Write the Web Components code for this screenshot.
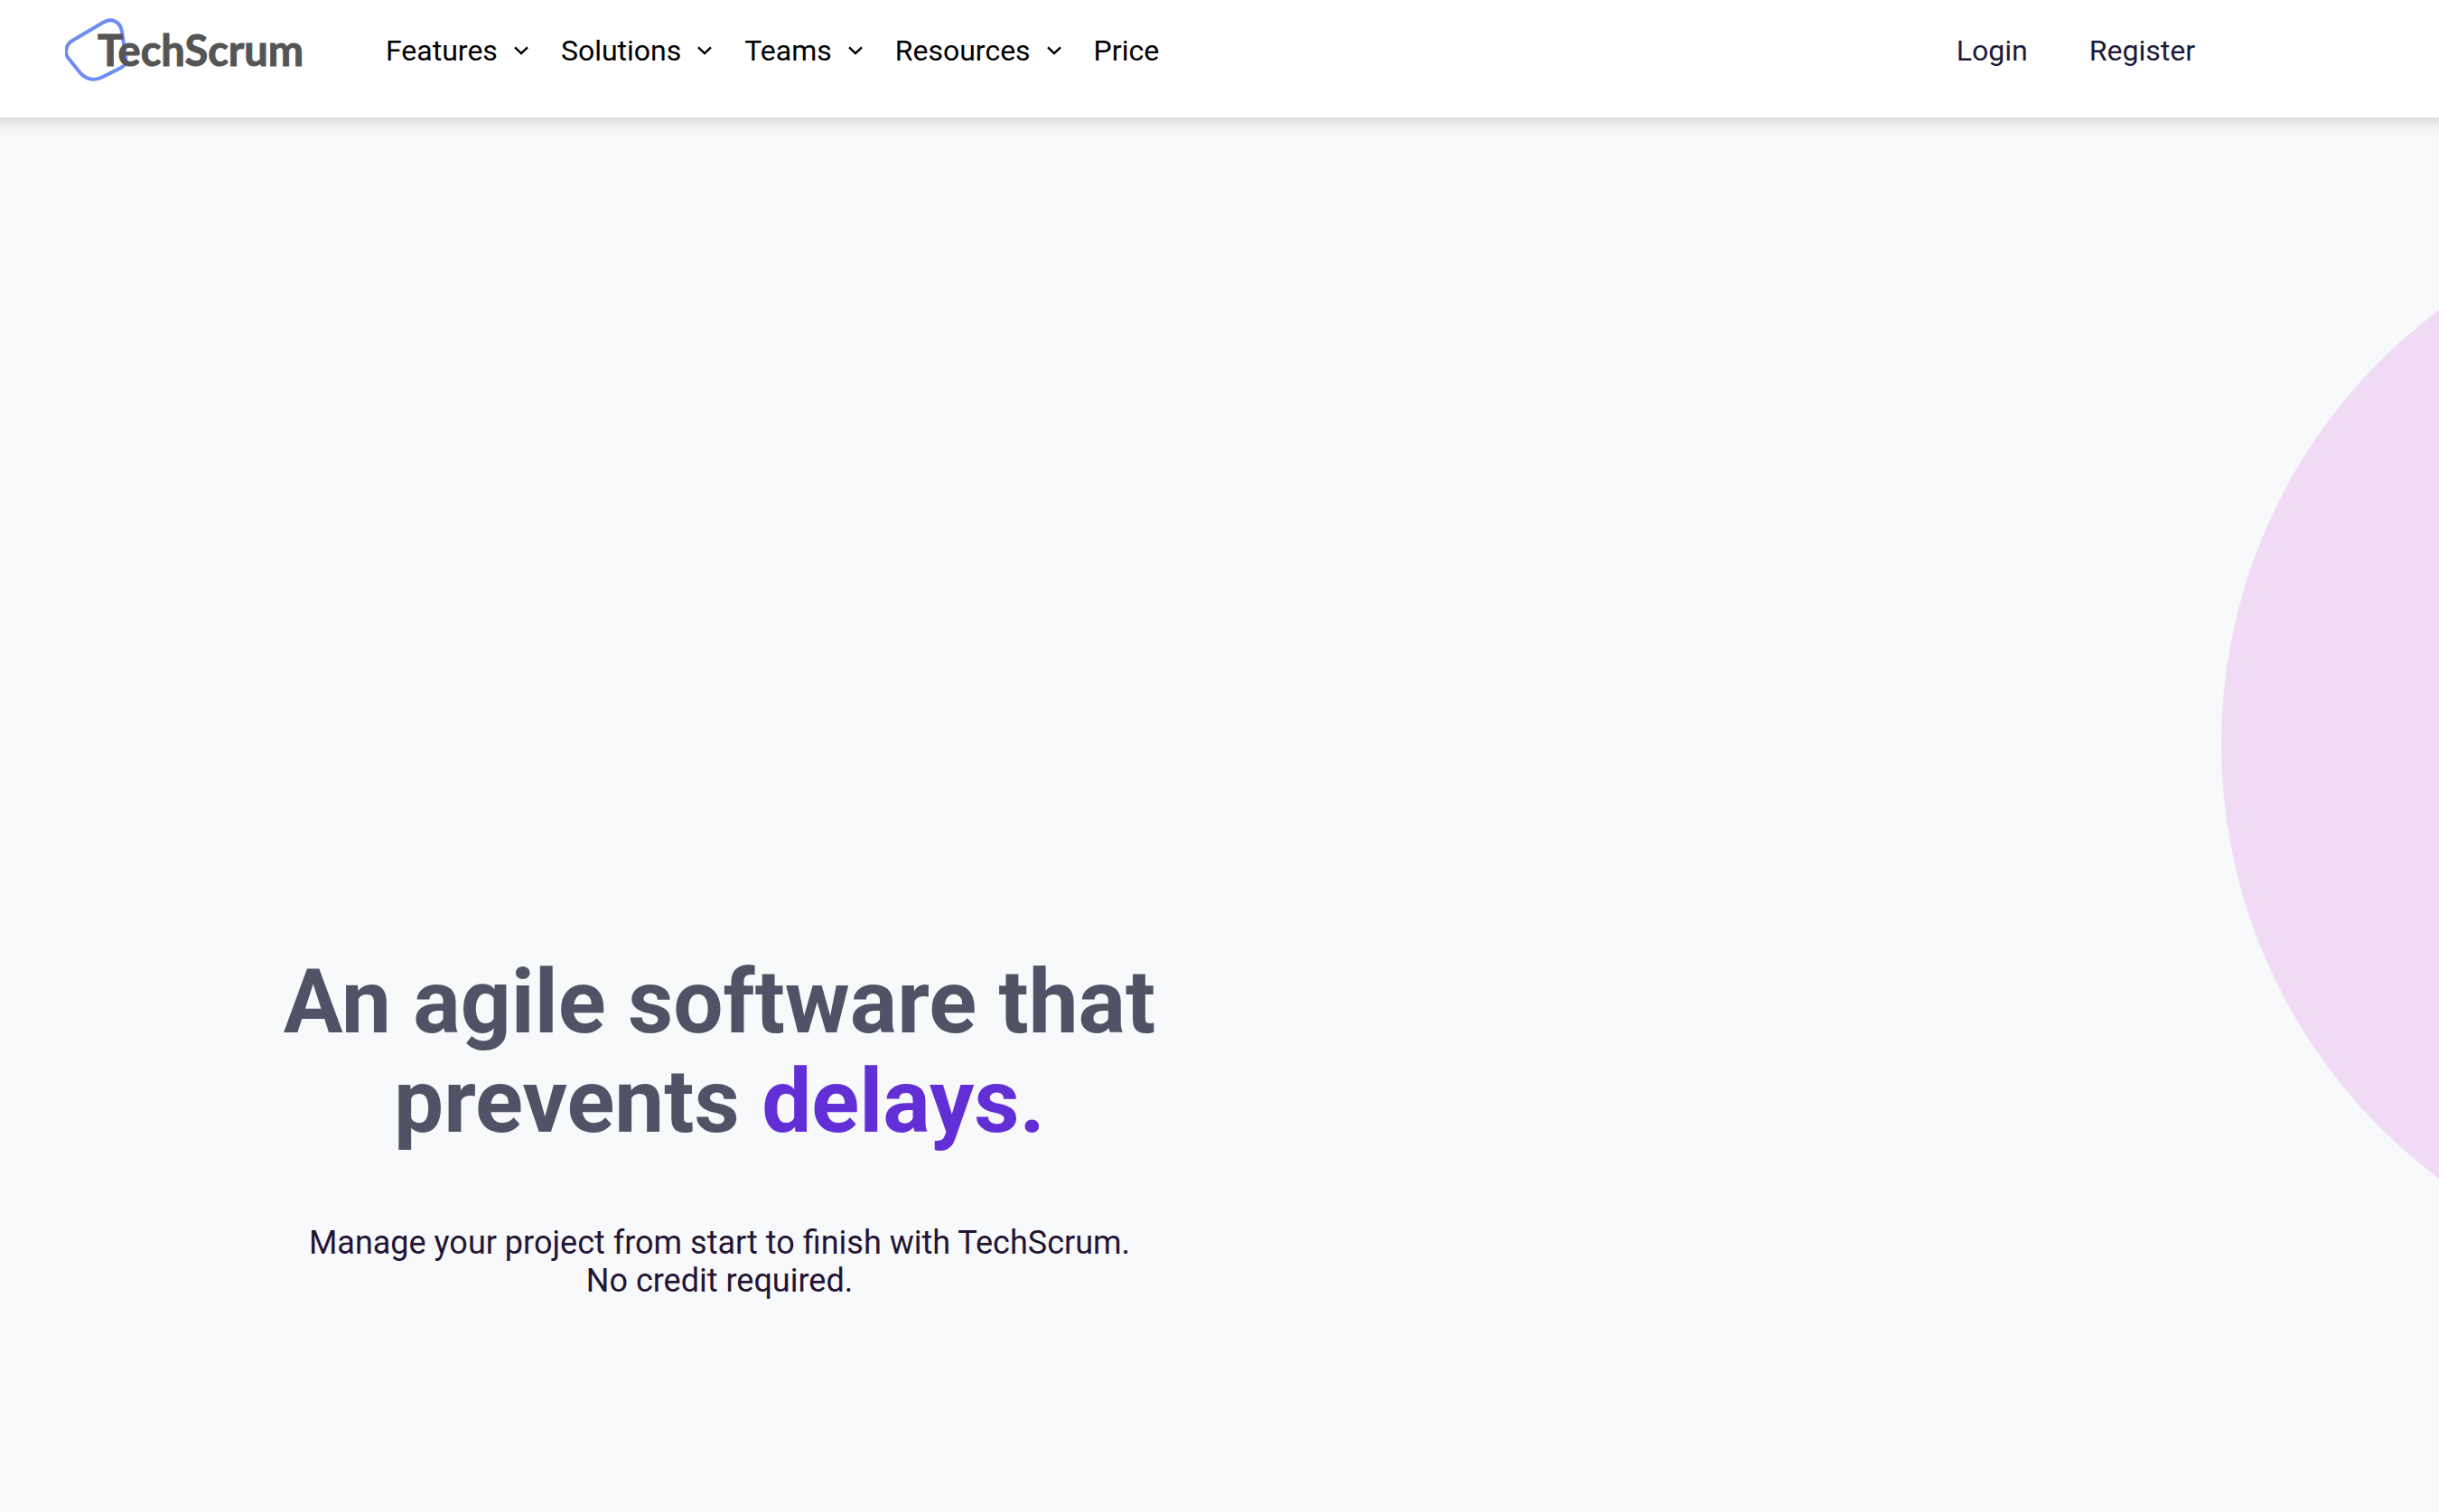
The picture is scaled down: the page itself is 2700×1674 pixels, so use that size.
<!DOCTYPE html>
<html lang="en">
<head>
<meta charset="utf-8">
<meta name="viewport" content="width=device-width, initial-scale=1">
<title>TechScrum</title>
<style>
  body {
    margin: 0;
    font-family: Roboto, "Liberation Sans", sans-serif;
    background: #f7f9fa;
  }
</style>
</head>
<body>
<ts-page>
  <ts-header slot="header">
    <ts-logo slot="logo"></ts-logo>
    <ts-nav-item menu>Features</ts-nav-item>
    <ts-nav-item menu>Solutions</ts-nav-item>
    <ts-nav-item menu>Teams</ts-nav-item>
    <ts-nav-item menu>Resources</ts-nav-item>
    <ts-nav-item>Price</ts-nav-item>
    <ts-nav-item slot="account">Login</ts-nav-item>
    <ts-nav-item slot="account">Register</ts-nav-item>
  </ts-header>
  <ts-hero>
    <span slot="title">An agile software that<br>prevents</span>
    <span slot="accent">delays.</span>
    <span slot="text">Manage your project from start to finish with TechScrum.<br>No credit required.</span>
  </ts-hero>
</ts-page>

<script>
  class BaseElement extends HTMLElement {
    constructor() {
      super();
      this.attachShadow({ mode: "open" }).innerHTML = this.render();
    }
  }

  customElements.define("ts-page", class extends BaseElement {
    render() {
      return `
        <style>
          :host { display: flex; flex-direction: column; min-height: 100vh; }
          main { flex: 1; display: flex; }
        </style>
        <slot name="header"></slot>
        <main><slot></slot></main>`;
    }
  });

  customElements.define("ts-logo", class extends BaseElement {
    render() {
      return `
        <style>
          :host { display: block; }
          a { display: block; }
          svg { display: block; width: 272px; height: 72px; }
          text { font: 700 47px Lato, "Liberation Sans", sans-serif; fill: #555; stroke: #555; stroke-width: 1; }
        </style>
        <a href="#" aria-label="TechScrum home">
          <svg viewBox="0 0 272 72">
            <path d="M8 25 L42 5 C52 -1 61 4 63 15 L67 43 C68 50 67 52 62 55 L42 65 C33 70 24 68 17 61 L5 46 C-1 40 0 30 8 25 Z"
              fill="none" stroke="#6f8cf5" stroke-width="4"/>
            <text x="36" y="53">TechScrum</text>
          </svg>
        </a>`;
    }
  });

  customElements.define("ts-nav-item", class extends BaseElement {
    render() {
      const label = `<slot></slot>`;
      return `
        <style>
          :host { display: block; }
          a, button {
            display: flex; align-items: center; gap: 18px;
            margin: 0; padding: 0; border: 0; background: none;
            font: inherit; font-size: 32px; line-height: 38px;
            color: inherit; text-decoration: none; cursor: pointer;
          }
          svg { width: 16px; height: 10px; }
        </style>
        ${this.hasAttribute("menu")
          ? `<button type="button" aria-haspopup="true">${label}
               <svg viewBox="0 0 16 10"><path d="M1 1.4 L8 8.2 L15 1.4" fill="none" stroke="currentColor" stroke-width="2.4"/></svg>
             </button>`
          : `<a href="#">${label}</a>`}`;
    }
  });

  customElements.define("ts-header", class extends BaseElement {
    render() {
      return `
        <style>
          :host { display: block; position: relative; z-index: 1; background: #fff; box-shadow: 0 -11px 16px 16px rgba(0, 0, 0, .14); }
          header {
            display: flex; align-items: center; box-sizing: border-box;
            min-height: 130px; padding: 0 10% 18px 72px; color: #000;
          }
          nav { display: flex; align-items: center; gap: 36px; margin-left: 83px; }
          .account { gap: 68px; margin-left: auto; color: #1c1a38; }
        </style>
        <header>
          <slot name="logo"></slot>
          <nav aria-label="Main"><slot></slot></nav>
          <nav class="account" aria-label="Account"><slot name="account"></slot></nav>
        </header>`;
    }
  });

  customElements.define("ts-hero", class extends BaseElement {
    render() {
      return `
        <style>
          :host { flex: 1; display: flex; align-items: flex-end; position: relative; overflow: hidden; }
          .copy { box-sizing: border-box; width: 59%; padding-bottom: 235px; text-align: center; }
          h1 { margin: 0 0 80px; font-size: 98px; line-height: 110px; font-weight: 700; color: #505365; }
          em { font-style: normal; color: #622fd6; }
          p { margin: 0; font-size: 36px; line-height: 42px; color: #251334; }
          .disc {
            position: absolute; top: 94px; left: calc(100% - 241px);
            width: 1200px; height: 1200px; border-radius: 50%; background: #f0daf5;
          }
        </style>
        <div class="disc"></div>
        <div class="copy">
          <h1><slot name="title"></slot> <em><slot name="accent"></slot></em></h1>
          <p><slot name="text"></slot></p>
        </div>`;
    }
  });
</script>
</body>
</html>
